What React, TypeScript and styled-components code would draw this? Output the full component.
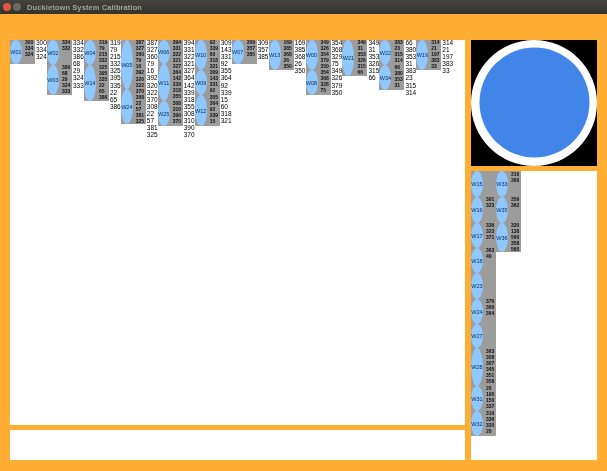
import React from 'react';
import styled, { createGlobalStyle } from 'styled-components';

const GlobalStyle = createGlobalStyle`
  html, body {
    margin: 0;
    padding: 0;
    background: #ffad33;
  }
`

const Window = styled.div`
  width: 607px;
  height: 471px;
  overflow: hidden;
  display: flex;
  flex-direction: column;
  background: #ffad33;
  font-family: "Liberation Sans", Arial, sans-serif;
  filter: blur(0.3px);
`

const TitleBar = styled.div`
  height: 14px;
  flex: none;
  display: flex;
  align-items: center;
  padding-left: 3px;
  background: linear-gradient(#45433e, #33322e);
`

const WinButton = styled.span<{ $close?: boolean }>`
  width: 8px;
  height: 8px;
  border-radius: 50%;
  margin-right: 2px;
  background: ${({ $close }) => ($close ? '#e2583a' : '#6b6a65')};
`

const Title = styled.span`
  margin-left: 4px;
  font-size: 7.5px;
  font-weight: 700;
  letter-spacing: 0.1px;
  color: #a5a39b;
  white-space: nowrap;
`

const Content = styled.div`
  flex: 1;
  display: flex;
  gap: 6px;
  padding: 26px 10px 11px;
`

const Column = styled.div<{ $width: number }>`
  width: ${({ $width }) => $width}px;
  display: flex;
  flex-direction: column;
  gap: 5px;
`

const Panel = styled.div<{ $height?: number }>`
  background: #fff;
  display: flex;
  align-items: flex-start;
  ${({ $height }) => ($height ? `height: ${$height}px; flex: none;` : 'flex: 1;')}
`

const RobotView = styled.svg`
  display: block;
  flex: none;
  width: 126px;
  height: 126px;
  background: #000;
`

const Group = styled.div<{ $width?: number }>`
  flex: none;
  width: ${({ $width }) => $width ?? 36.95}px;
  display: flex;
  align-items: flex-start;
`

const GrayBlock = styled.div`
  flex: none;
  width: 25px;
  display: flex;
  flex-direction: column;
  background: #9c9c9c;
`

const Worker = styled.div<{ $height: number }>`
  height: ${({ $height }) => $height}px;
  display: flex;
`

const Ellipse = styled.div`
  flex: none;
  width: 12px;
  height: 100%;
  border-radius: 50%;
  background: #8fc7ff;
  display: flex;
  align-items: center;
  justify-content: center;
  font-size: 5.5px;
  color: #0c2d52;
  white-space: nowrap;
`

const Pins = styled.div<{ $top: number }>`
  flex: 1;
  padding-left: 3px;
  margin-top: ${({ $top }) => $top}px;
  font-size: 5px;
  font-weight: 700;
  line-height: 6.1px;
  color: #111;
`

const Totals = styled.div`
  flex: 1;
  padding-left: 1px;
  margin-top: -1px;
  font-size: 6.5px;
  line-height: 7.1px;
  color: #000;
`

type WorkerData = { name: string; height: number; pins: string[]; top: number }
type GroupData = { workers: WorkerData[]; totals?: string[] }

const w = (name: string, height: number, pins = '', top = -1): WorkerData => ({
  name,
  height,
  pins: pins ? pins.split(' ') : [],
  top,
})
const list = (s: string) => s.split(' ')

const topGroups: GroupData[] = [
  { workers: [w('W01', 24, '300 334 324')], totals: list('300 334 324') },
  { workers: [w('W02', 25, '334 332'), w('W03', 30, '386 68 29 324 333')], totals: list('334 332 386 68 29 324 333') },
  { workers: [w('W04', 25, '319 79 215 332'), w('W14', 36, '325 395 335 22 65 386')], totals: list('319 79 215 332 325 395 335 22 65 386') },
  { workers: [w('W05', 49, '387 327 360 79 16 392 320 322'), w('W24', 35, '370 308 22 57 381 325')], totals: list('387 327 360 79 16 392 320 322 370 308 22 57 381 325') },
  { workers: [w('W06', 24, '394 331 322 321'), w('W11', 37, '327 364 142 339 318 355'), w('W25', 25, '308 310 390 370')], totals: list('394 331 322 321 327 364 142 339 318 355 308 310 390 370') },
  { workers: [w('W10', 30, '92 339 60 318 321'), w('W09', 25, '309 143 331 92'), w('W12', 31, '355 364 92 339 15')], totals: list('309 143 331 92 355 364 92 339 15 60 318 321') },
  { workers: [w('W07', 24, '309 357 385')], totals: list('309 357 385') },
  { workers: [w('W13', 30, '169 385 368 26 350')], totals: list('169 385 368 26 350') },
  { workers: [w('W00', 30, '349 326 354 379 350'), w('W08', 25, '354 368 328 75')], totals: list('354 368 329 75 349 326 379 350') },
  { workers: [w('W21', 36, '349 31 353 326 315 66')], totals: list('349 31 353 326 315 66') },
  { workers: [w('W22', 25, '383 23 315 314'), w('W34', 25, '66 380 353 31')], totals: list('66 380 353 31 383 23 315 314') },
  { workers: [w('W19', 30, '314 21 197 383 33')], totals: list('314 21 197 383 33') },
]

const sideGroups: GroupData[] = [
  {
    workers: [
      w('W15', 26),
      w('W16', 26, '391 323'),
      w('W17', 25, '336 323 371'),
      w('W18', 25, '363 49'),
      w('W23', 26),
      w('W24', 25, '376 366 364'),
      w('W27', 24),
      w('W28', 38, '363 308 307 345 351 358 20', 0),
      w('W31', 25, '190 150 337', 5),
      w('W32', 25, '316 336 330 20'),
    ],
  },
  {
    workers: [
      w('W33', 26, '316 366', 0),
      w('W35', 26, '359 362'),
      w('W36', 29, '330 138 560 358 560'),
    ],
  },
]

const NodeGroup: React.FC<{ group: GroupData; width?: number }> = ({ group, width }) => (
  <Group $width={width}>
    <GrayBlock>
      {group.workers.map((worker) => (
        <Worker key={worker.name} $height={worker.height}>
          <Ellipse>{worker.name}</Ellipse>
          <Pins $top={worker.top}>
            {worker.pins.map((pin, i) => (
              <div key={i}>{pin}</div>
            ))}
          </Pins>
        </Worker>
      ))}
    </GrayBlock>
    {group.totals && (
      <Totals>
        {group.totals.map((total, i) => (
          <div key={i}>{total}</div>
        ))}
      </Totals>
    )}
  </Group>
)

const App: React.FC = () => {
  return (
    <Window>
      <GlobalStyle />
      <TitleBar>
        <WinButton $close />
        <WinButton />
        <Title>Duckietown System Calibration</Title>
      </TitleBar>
      <Content>
        <Column $width={455}>
          <Panel>
            {topGroups.map((group) => (
              <NodeGroup key={group.workers[0].name} group={group} />
            ))}
          </Panel>
          <Panel $height={30} />
        </Column>
        <Column $width={126}>
          <RobotView viewBox="0 0 126 126">
            <circle cx="63" cy="63" r="63" fill="#fff" />
            <circle cx="63.5" cy="62.5" r="55" fill="#4285e8" />
          </RobotView>
          <Panel>
            {sideGroups.map((group) => (
              <NodeGroup key={group.workers[0].name} group={group} width={25} />
            ))}
          </Panel>
        </Column>
      </Content>
    </Window>
  )
}

export default App;
